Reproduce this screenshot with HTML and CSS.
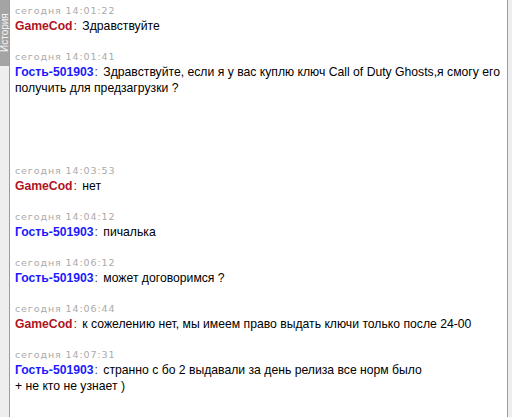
FILE: index.html
```html
<!DOCTYPE html>
<html lang="ru">
<head>
  <meta charset="UTF-8" />
  <title>Чат</title>
  <link rel="stylesheet" href="styles.css">
</head>
<body>
  <div class="side">
    <div class="tab">История</div>
  </div>
  <div class="chat">
    <div class="msg">
      <div class="time">сегодня 14:01:22</div>
      <div class="text"><span class="nick op">GameCod</span><span class="colon">:</span> Здравствуйте</div>
    </div>
    <div class="msg tall">
      <div class="time">сегодня 14:01:41</div>
      <div class="text"><span class="nick guest">Гость-501903</span><span class="colon">:</span> Здравствуйте, если я у вас куплю ключ Call of Duty Ghosts,я смогу его<br>получить для предзагрузки ?<br><br><br><br></div>
    </div>
    <div class="msg">
      <div class="time">сегодня 14:03:53</div>
      <div class="text"><span class="nick op">GameCod</span><span class="colon">:</span> нет</div>
    </div>
    <div class="msg">
      <div class="time">сегодня 14:04:12</div>
      <div class="text"><span class="nick guest">Гость-501903</span><span class="colon">:</span> пичалька</div>
    </div>
    <div class="msg">
      <div class="time">сегодня 14:06:12</div>
      <div class="text"><span class="nick guest">Гость-501903</span><span class="colon">:</span> может договоримся ?</div>
    </div>
    <div class="msg">
      <div class="time">сегодня 14:06:44</div>
      <div class="text"><span class="nick op">GameCod</span><span class="colon">:</span> к сожелению нет, мы имеем право выдать ключи только после 24-00</div>
    </div>
    <div class="msg">
      <div class="time">сегодня 14:07:31</div>
      <div class="text"><span class="nick guest">Гость-501903</span><span class="colon">:</span> странно с бо 2 выдавали за день релиза все норм было<br>+ не кто не узнает )</div>
    </div>
  </div>
  <div class="gutter"></div>
</body>
</html>
```

FILE: styles.css
```css
html, body {
  height: 100%;
}
body {
  margin: 0;
  display: flex;
  background: #eeeeee;
  font-family: "Liberation Sans", Arial, sans-serif;
  font-size: 12px;
  color: #000;
  overflow: hidden;
}
.side {
  width: 9px;
  flex: none;
  background: #eeeeee;
}
.tab {
  height: 66px;
  width: 9px;
  background: #a4a4a4;
  color: #f4f4f4;
  font-size: 10px;
  line-height: 9px;
  writing-mode: vertical-rl;
  transform: rotate(180deg);
  text-align: center;
}
.chat {
  flex: 1;
  background: #fff;
  border-left: 1px solid #9c9c9c;
  border-right: 1px solid #9c9c9c;
  padding: 4px 5px 0 5px;
}
.msg {
  margin-bottom: 16px;
}
.msg.tall {
  margin-bottom: 20px;
}
.time {
  font-family: "DejaVu Sans", Verdana, sans-serif;
  font-size: 9.5px;
  letter-spacing: 0.9px;
  line-height: 14px;
  color: #aaaaaa;
}
.text {
  line-height: 16px;
  font-size: 12.2px;
}
.nick {
  font-weight: bold;
}
.nick.op {
  color: #b0141e;
}
.nick.guest {
  color: #1a1aff;
}
.colon {
  color: #333;
  margin-left: 1px;
  margin-right: 2px;
}
.gutter {
  width: 4px;
  flex: none;
  background: #eeeeee;
}
```
